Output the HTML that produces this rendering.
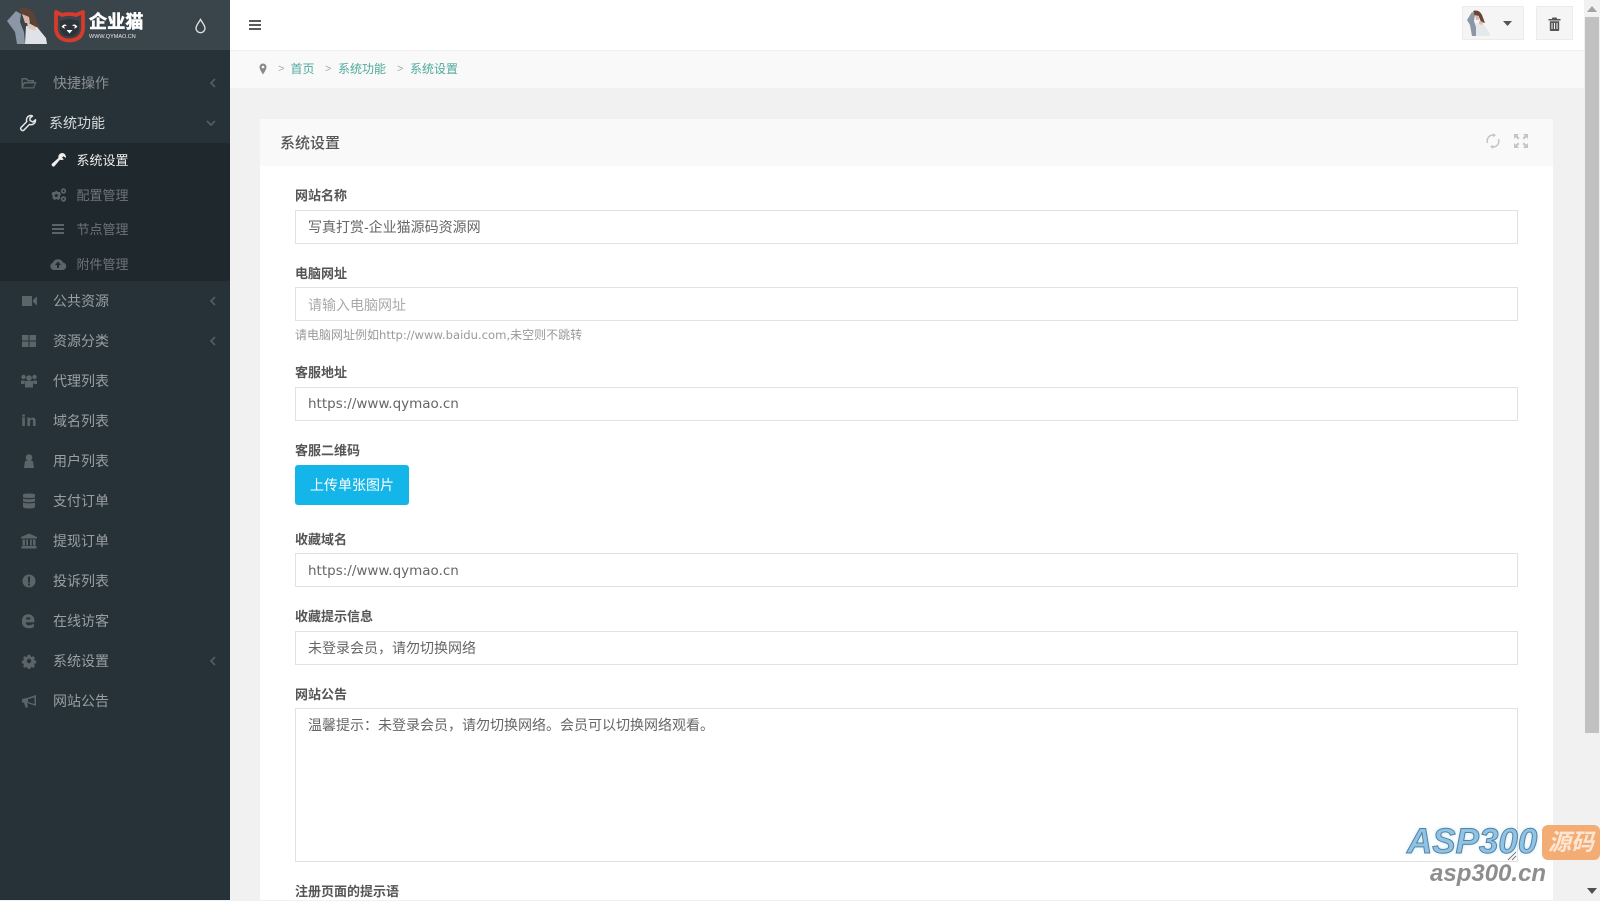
<!DOCTYPE html>
<html lang="zh"><head><meta charset="utf-8"><title>系统设置</title>
<style>
*{box-sizing:border-box}
html,body{margin:0;padding:0;width:1600px;height:900px;overflow:hidden;background:#f1f1f1;font-family:"Liberation Sans","Noto Sans CJK SC",sans-serif;}
.a{position:absolute;white-space:nowrap}
#side{position:absolute;left:0;top:0;width:230px;height:900px;background:#263238}
#logo{position:absolute;left:0;top:0;width:230px;height:50px;background:#3a444b}
#sub{position:absolute;left:0;top:143px;width:230px;height:138px;background:#1f282d}
.m{position:absolute;left:53px;font-size:14px;line-height:20px;color:#9a9fa2}
.sm{position:absolute;left:76.500px;font-size:13px;line-height:20px;color:#6f7477}
.ic{position:absolute;width:18px;height:16px;color:#5b6468;fill:currentColor}
.ch{position:absolute;left:209px;width:8px;height:10px;fill:none;stroke:#525c61;stroke-width:1.700}
.lb{position:absolute;left:295px;font-size:13px;font-weight:700;line-height:18px;color:#555}
.in{position:absolute;left:295px;width:1223px;height:34px;background:#fff;border:1px solid #e2e2e2;font-size:14px;line-height:32px;padding-left:12px;color:#666}
.url{font-family:"DejaVu Sans","Liberation Sans",sans-serif;font-size:13.500px;letter-spacing:0}
.bc{position:absolute;top:60px;font-size:12px;line-height:18px;color:#4fa99c}
.sp{position:absolute;top:60px;font-size:11px;line-height:18px;color:#aaa}
</style></head><body>
<div id="side">
<div id="logo"></div>
<svg class="a" style="left:5px;top:6px" width="44" height="38" viewBox="0 0 44 38">
<path d="M2 15 L11 5 L16 8 L15 16 L19 26 L20 38 L12 38 L10 26 Z" fill="#8b96a6"/>
<path d="M14 3 Q23 -1 29 8 L35 23 L29 20 L25 14 L18 11 Z" fill="#5d4237"/>
<path d="M17 8 L24 11 L25 17 L20 17 Z" fill="#d8b6a4"/>
<path d="M21 20 L32 21 L41 32 L42 38 L20 38 Z" fill="#dfe3e8"/>
<path d="M22 16 L31 21 L30 25 L23 22 Z" fill="#e3c8ba"/>
</svg>
<svg class="a" style="left:53px;top:9px" width="33" height="34" viewBox="0 0 33 34">
<path d="M3 3 L9 6 Q16 4 23 6 L30 3 L30 20 Q29 31 16.500 31.500 Q4 31 3 20 Z" fill="none" stroke="#d83a2c" stroke-width="3.800" stroke-linejoin="round"/>
<path d="M7 12 Q16 8.500 26 12 L26 20 Q24 27.500 16.500 27.500 Q9 27.500 7 20 Z" fill="#2d3338"/>
<path d="M8.500 18 q2.500 -4 5.500 -1.500 l-3 .8 l1 2.500 z M24.500 18 q-2.500 -4 -5.500 -1.500 l3 .8 l-1 2.500 z M13.500 21 h6 l-3 3.500 z" fill="#fff"/>
</svg>
<div class="a" style="left:89px;top:10px;font-size:18px;font-weight:700;line-height:24px;color:#fff;letter-spacing:.2px;-webkit-text-stroke:.6px #fff">企业猫</div>
<div class="a" style="left:89px;top:33px;font-size:5.500px;line-height:8px;color:#e8e8e8">WWW.QYMAO.CN</div>
<svg class="a" style="left:194px;top:18px" width="13" height="16" viewBox="0 0 13 16"><path d="M6.500 1.500 C4.500 5 2 7.500 2 10.200 A4.500 4.500 0 0 0 11 10.200 C11 7.500 8.500 5 6.500 1.500 Z" fill="none" stroke="#ddd" stroke-width="1.400"/></svg>

<svg class="ic" style="left:20px;top:75px" viewBox="0 0 18 16"><path d="M2 3h5l1.500 2H14v2h2.500L14 13.500H1.500V3.500z M3 4.500V8.500L4.200 7H12.500V6.500H7.500L6.300 4.500z M4.800 8.500 L3 12.200H13L15 8.500z" fill-rule="evenodd"/></svg>
<div class="m" style="top:73px;color:#8b9093">快捷操作</div>
<svg class="ch" style="top:78px" viewBox="0 0 8 10"><path d="M6 1 L2 5 L6 9"/></svg>

<svg class="a" style="left:19px;top:114px" width="18" height="18" viewBox="0 0 18 18"><path d="M11.500 1.500 A4.500 4.500 0 0 0 7.800 7.600 L2 13.500 A2 2 0 0 0 4.800 16.200 L10.500 10.400 A4.500 4.500 0 0 0 16.500 5.800 L13.800 8 L11 6.500 L11 4 L13.500 2 A4.500 4.500 0 0 0 11.500 1.500 Z" fill="none" stroke="#e4e5e6" stroke-width="1.500" stroke-linejoin="round"/></svg>
<div class="m" style="left:49px;top:113px;color:#d8dadb">系统功能</div>
<svg class="ch" style="top:119px;left:206px;width:10px;height:8px" viewBox="0 0 10 8"><path d="M1 2 L5 6 L9 2"/></svg>

<div id="sub"></div>
<svg class="ic" style="left:50px;top:152px;color:#eee" viewBox="0 0 18 16"><path d="M12 1 A4 4 0 0 1 15.800 6 L13.500 4.200 L12 5.500 L13.800 7.400 A4 4 0 0 1 10 7.600 L4.700 14 A1.700 1.700 0 0 1 2.200 11.500 L8.400 6 A4 4 0 0 1 12 1 Z"/></svg>
<div class="sm" style="top:151px;color:#eceded">系统设置</div>
<svg class="ic" style="left:50px;top:187px" viewBox="0 0 18 16"><path d="M6.500 3.500 L8 5 L10 5 L11 7.500 L9.700 9 L10.500 11 L8.500 13 L6.500 12 L4.500 13 L2.200 11 L3 9 L1.500 7.500 L2.500 5 L4.500 5 Z"/><circle cx="13.500" cy="4" r="2.700"/><circle cx="13.500" cy="12" r="2.700"/><circle cx="6.300" cy="8.500" r="1.500" fill="#1f282d"/><circle cx="13.500" cy="4" r="1" fill="#1f282d"/><circle cx="13.500" cy="12" r="1" fill="#1f282d"/></svg>
<div class="sm" style="top:186px">配置管理</div>
<svg class="ic" style="left:49px;top:221px" viewBox="0 0 18 16"><path d="M3 3h12v2H3zM3 7h12v2H3zM3 11h12v2H3z"/></svg>
<div class="sm" style="top:220px">节点管理</div>
<svg class="ic" style="left:49px;top:256px" viewBox="0 0 18 16"><path d="M5 14 A3.700 3.700 0 0 1 3.800 6.800 A5.500 5.500 0 0 1 14 6.500 A3.800 3.800 0 0 1 14 14 Z"/><path d="M9 5.500 L12 9 H10 V12 H8 V9 H6 Z" fill="#1f282d"/></svg>
<div class="sm" style="top:255px">附件管理</div>

<svg class="ic" style="left:20px;top:293px" viewBox="0 0 18 16"><path d="M2 3h10v10H2zM13 7 L17 3.500V12.500L13 9z"/></svg>
<div class="m" style="top:291px">公共资源</div>
<svg class="ch" style="top:296px" viewBox="0 0 8 10"><path d="M6 1 L2 5 L6 9"/></svg>

<svg class="ic" style="left:20px;top:333px" viewBox="0 0 18 16"><path d="M2 2h6.500v5.500H2zM9.500 2H16v5.500H9.500zM2 8.500h6.500V14H2zM9.500 8.500H16V14H9.500z"/></svg>
<div class="m" style="top:331px">资源分类</div>
<svg class="ch" style="top:336px" viewBox="0 0 8 10"><path d="M6 1 L2 5 L6 9"/></svg>

<svg class="ic" style="left:20px;top:373px" viewBox="0 0 18 16"><circle cx="9" cy="5" r="2.800"/><circle cx="3.500" cy="4" r="2.200"/><circle cx="14.500" cy="4" r="2.200"/><path d="M1 7.500h4L4.500 11H1zM13 7.500h4V11h-3.500zM5 8h8v6.500H5z"/></svg>
<div class="m" style="top:371px">代理列表</div>

<div class="a" style="left:21px;top:411px;font-size:15px;font-weight:700;line-height:20px;color:#5b6468;font-family:'DejaVu Sans',sans-serif">in</div>
<div class="m" style="top:411px">域名列表</div>

<svg class="ic" style="left:20px;top:453px" viewBox="0 0 18 16"><circle cx="9" cy="4.500" r="3.300"/><path d="M4 15 L4.800 9 Q5.500 7.500 7 7.500 H11 Q12.500 7.500 13.200 9 L14 15 Z"/></svg>
<div class="m" style="top:451px">用户列表</div>

<svg class="ic" style="left:20px;top:493px" viewBox="0 0 18 16"><path d="M3 1.500 Q3 .5 9 .5 Q15 .5 15 1.500 V4 Q15 5 9 5 Q3 5 3 4Z M3 5.500 Q9 7 15 5.500 V8 Q15 9.200 9 9.200 Q3 9.200 3 8Z M3 9.700 Q9 11 15 9.700 V13.500 Q15 15.500 9 15.500 Q3 15.500 3 13.500Z"/></svg>
<div class="m" style="top:491px">支付订单</div>

<svg class="ic" style="left:20px;top:533px" viewBox="0 0 18 16"><path d="M9 .5 L17 4 V5.500 H1 V4 Z M2.500 6.500H5V12.500H2.500Z M6.200 6.500H8V12.500H6.200Z M10 6.500H11.800V12.500H10Z M13 6.500H15.500V12.500H13Z M1.500 13H16.500V15.500H1.500Z"/></svg>
<div class="m" style="top:531px">提现订单</div>

<svg class="ic" style="left:20px;top:573px" viewBox="0 0 18 16"><circle cx="9" cy="8" r="6.500"/><path d="M8 3.500h2v6H8zM8 10.500h2v2H8z" fill="#263238"/></svg>
<div class="m" style="top:571px">投诉列表</div>

<div class="a" style="left:21px;top:606px;font-size:25px;font-weight:700;line-height:28px;color:#5b6468;font-family:'DejaVu Sans',sans-serif;transform-origin:0 50%;transform:scaleX(.85)">e</div>
<div class="m" style="top:611px">在线访客</div>

<svg class="ic" style="left:20px;top:653px" viewBox="0 0 18 16"><path d="M7.500 1h3l.4 2 1.700.7 1.700-1.100 2.100 2.100-1.100 1.700.7 1.700 2 .4v3l-2 .4-.7 1.700 1.100 1.700-2.100 2.100-1.700-1.100-1.700.7-.4 2h-3l-.4-2-1.700-.7-1.700 1.100-2.100-2.100 1.100-1.700-.7-1.700-2-.4v-3l2-.4.7-1.700-1.100-1.700 2.100-2.100 1.700 1.100 1.700-.7z" transform="translate(1.800 1) scale(.8)"/><circle cx="9" cy="8" r="2.200" fill="#263238"/></svg>
<div class="m" style="top:651px">系统设置</div>
<svg class="ch" style="top:656px" viewBox="0 0 8 10"><path d="M6 1 L2 5 L6 9"/></svg>

<svg class="ic" style="left:20px;top:693px" viewBox="0 0 18 16"><path d="M16 2 V13 L7 10 L8 14.500 H5.500 L4 9.800 L2 9.500 V6 L7 5 Z M14.500 4.200 L8 6.200 V9 L14.500 11 Z" fill-rule="evenodd"/></svg>
<div class="m" style="top:691px">网站公告</div>
</div>

<!-- topbar -->
<div class="a" style="left:230px;top:0;width:1354px;height:51px;background:#fff;border-bottom:1px solid #f0f0f0"></div>
<svg class="a" style="left:248px;top:19px" width="14" height="12" viewBox="0 0 14 12"><path d="M1 1h12v2H1zM1 5h12v2H1zM1 9h12v2H1z" fill="#5a5a5a"/></svg>
<div class="a" style="left:1462px;top:6px;width:62px;height:34px;background:#f5f5f5;border:1px solid #ececec"></div>
<svg class="a" style="left:1466px;top:9px" width="26" height="28" viewBox="0 0 26 28">
<path d="M1 11 L6 3 L9 5 L8 12 L10 18 L10 27 L6 27 L4 16 Z" fill="#8b96a6"/>
<path d="M7 2 Q13 0 16 6 L19 14 L15 13 L13 8 L9 7 Z" fill="#6a463a"/>
<path d="M10 14 L17 14 L24 25 L24 27 L10 27 Z" fill="#e6e9ec"/>
<path d="M13 12 L17 13 L16 16 L13 15 Z M9 6 L13 7 L13 11 L10 11Z" fill="#dcbcac"/>
</svg>
<svg class="a" style="left:1502px;top:20px" width="11" height="7" viewBox="0 0 11 7"><path d="M1 1h9L5.500 6z" fill="#555"/></svg>
<div class="a" style="left:1536px;top:6px;width:37px;height:34px;background:#f5f5f5;border:1px solid #ececec"></div>
<svg class="a" style="left:1548px;top:17px" width="13" height="14" viewBox="0 0 13 14"><path d="M4.500 0.500h4l.7 1.500H12.500v1.500H.5V2h3.300z M1.800 4.200h9.400V13a1 1 0 0 1-1 1H2.800a1 1 0 0 1-1-1z" fill="#555"/><path d="M4 6v6M6.500 6v6M9 6v6" stroke="#f5f5f5" stroke-width="1"/></svg>

<!-- breadcrumb -->
<div class="a" style="left:230px;top:51px;width:1354px;height:37px;background:#f9f9f9"></div>
<svg class="a" style="left:259px;top:63px" width="8" height="12" viewBox="0 0 8 12"><path d="M4 .500A3.500 3.500 0 0 0 .500 4C.500 6.500 4 11.500 4 11.500S7.500 6.500 7.500 4A3.500 3.500 0 0 0 4 .500Z" fill="#8a8a8a"/><circle cx="4" cy="4" r="1.300" fill="#f9f9f9"/></svg>
<div class="sp" style="left:278px">&gt;</div>
<div class="bc" style="left:290.500px">首页</div>
<div class="sp" style="left:325px">&gt;</div>
<div class="bc" style="left:338px">系统功能</div>
<div class="sp" style="left:397px">&gt;</div>
<div class="bc" style="left:410px">系统设置</div>

<!-- panel -->
<div class="a" style="left:260px;top:119px;width:1293px;height:781px;background:#fff"></div>
<div class="a" style="left:260px;top:119px;width:1293px;height:47px;background:#f9f9f9"></div>
<div class="a" style="left:280px;top:133px;font-size:15px;line-height:22px;font-weight:500;color:#555">系统设置</div>
<svg class="a" style="left:1485px;top:133px" width="16" height="16" viewBox="0 0 16 16"><path d="M2.500 10 A6 6 0 0 1 8 2 M13.500 6 A6 6 0 0 1 8 14" fill="none" stroke="#c4c4c4" stroke-width="1.500"/><path d="M8 .2 L11 2.200 L8 4.200Z M8 11.800 L5 13.800 L8 15.800Z" fill="#c4c4c4"/></svg>
<svg class="a" style="left:1513px;top:133px" width="16" height="16" viewBox="0 0 16 16"><path d="M1 1h5L4.300 2.700 6.500 5 5 6.500 2.700 4.300 1 6zM15 1v5L13.300 4.300 11 6.500 9.500 5 11.700 2.700 10 1zM1 15v-5l1.700 1.700L5 9.500 6.500 11 4.300 13.300 6 15zM15 15h-5l1.700-1.700L9.500 11 11 9.500l2.300 2.200L15 10z" fill="#c4c4c4"/></svg>

<div class="lb" style="top:187px">网站名称</div>
<div class="in" style="top:210px">写真打赏-企业猫源码资源网</div>
<div class="lb" style="top:265px">电脑网址</div>
<div class="in" style="top:287px;color:#aaa;line-height:34px">请输入电脑网址</div>
<div class="a" style="left:295px;top:326px;font-size:12px;line-height:18px;color:#999">请电脑网址例如<span style="font-family:'DejaVu Sans',sans-serif;font-size:11.600px">http://www.baidu.com,</span>未空则不跳转</div>
<div class="lb" style="top:364px">客服地址</div>
<div class="in url" style="top:387px">https://www.qymao.cn</div>
<div class="lb" style="top:442px">客服二维码</div>
<div class="a" style="left:295px;top:465px;width:114px;height:40px;background:#14b5e8;border-radius:3px;color:#fff;font-size:14px;line-height:40px;text-align:center">上传单张图片</div>
<div class="lb" style="top:531px">收藏域名</div>
<div class="in url" style="top:553px;line-height:34px">https://www.qymao.cn</div>
<div class="lb" style="top:608px">收藏提示信息</div>
<div class="in" style="top:631px">未登录会员，请勿切换网络</div>
<div class="lb" style="top:686px">网站公告</div>
<div class="in" style="top:708px;height:154px;line-height:18px;padding-top:7px">温馨提示：未登录会员，请勿切换网络。会员可以切换网络观看。</div>
<svg class="a" style="left:1507px;top:851px" width="10" height="10" viewBox="0 0 10 10"><path d="M1 9 L9 1 M5 9 L9 5" stroke="#777" stroke-width="1"/></svg>
<div class="lb" style="top:883px">注册页面的提示语</div>

<!-- scrollbar -->
<div class="a" style="left:1584px;top:0;width:16px;height:900px;background:#f1f1f1"></div>
<div class="a" style="left:1585px;top:17px;width:14px;height:716px;background:#c1c1c1"></div>
<svg class="a" style="left:1587px;top:6px" width="10" height="6" viewBox="0 0 10 6"><path d="M5 0 L10 6 H0Z" fill="#a3a3a3"/></svg>
<svg class="a" style="left:1587px;top:888px" width="10" height="6" viewBox="0 0 10 6"><path d="M0 0H10L5 6Z" fill="#505050"/></svg>

<!-- watermark -->
<div class="a" style="left:1407px;top:821px;font-size:35px;line-height:42px;font-weight:700;font-style:italic;color:#8cc4e8;-webkit-text-stroke:1px #5e7f9a;text-shadow:0 0 5px #bfe8fa">ASP300</div>
<div class="a" style="left:1542px;top:825px;width:58px;height:35px;background:#f3ac74;border-radius:6px;color:#fde6d3;font-size:23px;font-weight:700;font-style:italic;line-height:34px;text-align:center">源码</div>
<div class="a" style="left:1430px;top:860px;font-size:24px;line-height:28px;font-weight:700;font-style:italic;color:#8e8e8e">asp300.cn</div>
</body></html>
